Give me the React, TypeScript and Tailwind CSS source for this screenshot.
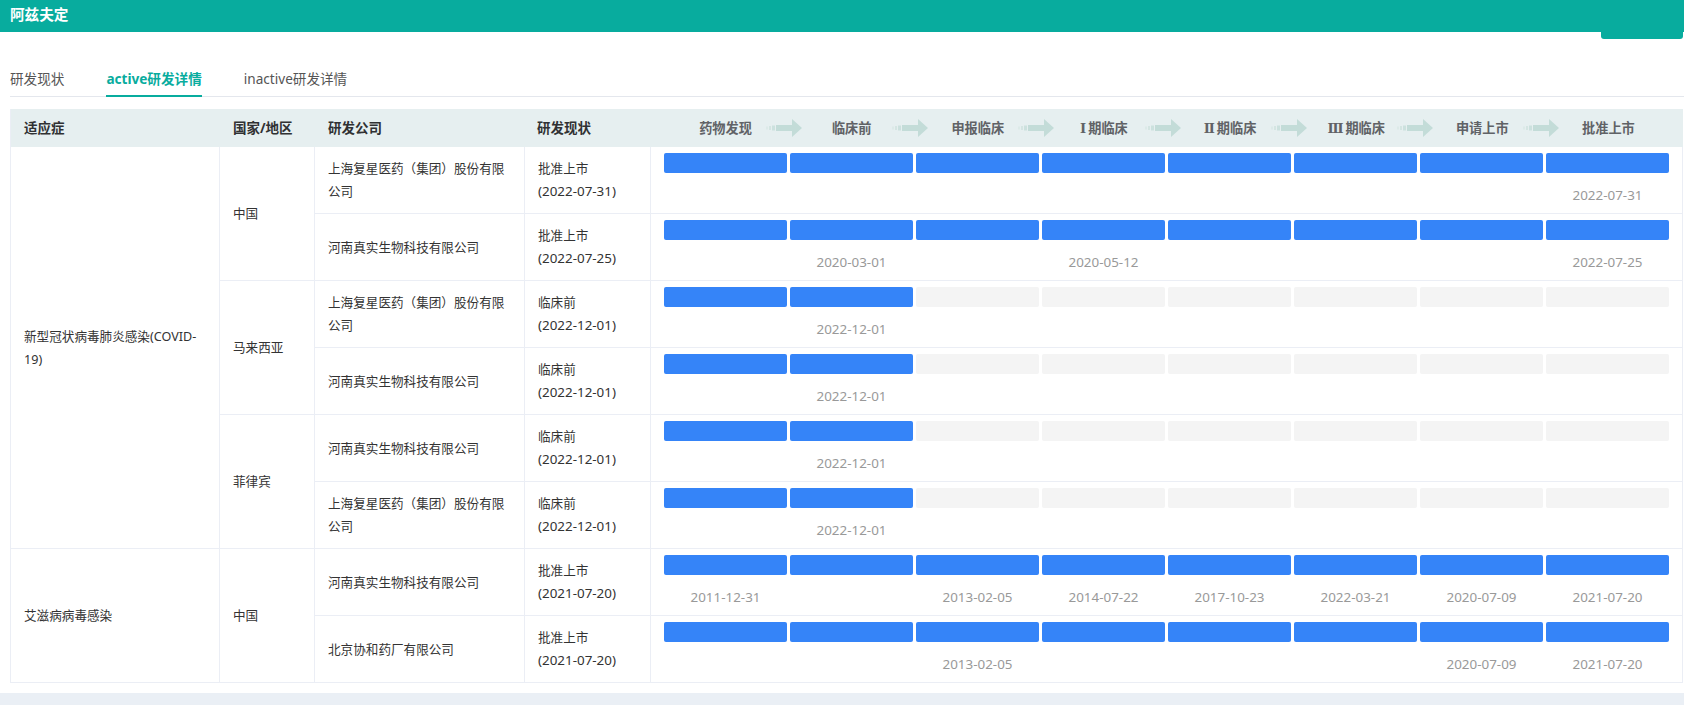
import { Fragment } from 'react';

const TEAL = '#08ac9e';

const stages = ['药物发现', '临床前', '申报临床', 'Ⅰ期临床', 'Ⅱ期临床', 'Ⅲ期临床', '申请上市', '批准上市'];

type Trial = {
  company: string;
  status: string;
  date: string;
  filled: number;
  dates: (string | null)[];
};

type Country = { name: string; trials: Trial[] };
type Indication = { name: string; span: string; countries: Country[] };

const data: Indication[] = [
  {
    name: '新型冠状病毒肺炎感染(COVID-19)',
    span: 'row-span-6',
    countries: [
      {
        name: '中国',
        trials: [
          {
            company: '上海复星医药（集团）股份有限公司',
            status: '批准上市',
            date: '2022-07-31',
            filled: 8,
            dates: [null, null, null, null, null, null, null, '2022-07-31'],
          },
          {
            company: '河南真实生物科技有限公司',
            status: '批准上市',
            date: '2022-07-25',
            filled: 8,
            dates: [null, '2020-03-01', null, '2020-05-12', null, null, null, '2022-07-25'],
          },
        ],
      },
      {
        name: '马来西亚',
        trials: [
          {
            company: '上海复星医药（集团）股份有限公司',
            status: '临床前',
            date: '2022-12-01',
            filled: 2,
            dates: [null, '2022-12-01', null, null, null, null, null, null],
          },
          {
            company: '河南真实生物科技有限公司',
            status: '临床前',
            date: '2022-12-01',
            filled: 2,
            dates: [null, '2022-12-01', null, null, null, null, null, null],
          },
        ],
      },
      {
        name: '菲律宾',
        trials: [
          {
            company: '河南真实生物科技有限公司',
            status: '临床前',
            date: '2022-12-01',
            filled: 2,
            dates: [null, '2022-12-01', null, null, null, null, null, null],
          },
          {
            company: '上海复星医药（集团）股份有限公司',
            status: '临床前',
            date: '2022-12-01',
            filled: 2,
            dates: [null, '2022-12-01', null, null, null, null, null, null],
          },
        ],
      },
    ],
  },
  {
    name: '艾滋病病毒感染',
    span: 'row-span-2',
    countries: [
      {
        name: '中国',
        trials: [
          {
            company: '河南真实生物科技有限公司',
            status: '批准上市',
            date: '2021-07-20',
            filled: 8,
            dates: ['2011-12-31', null, '2013-02-05', '2014-07-22', '2017-10-23', '2022-03-21', '2020-07-09', '2021-07-20'],
          },
          {
            company: '北京协和药厂有限公司',
            status: '批准上市',
            date: '2021-07-20',
            filled: 8,
            dates: [null, null, '2013-02-05', null, null, null, '2020-07-09', '2021-07-20'],
          },
        ],
      },
    ],
  },
];

function StepArrow() {
  return (
    <svg
      width="36"
      height="18"
      viewBox="0 0 36 18"
      className="absolute right-[-15px] top-1/2 -translate-y-1/2"
      aria-hidden
    >
      <rect x="0" y="7.5" width="2" height="3" fill="#dceae8" />
      <rect x="3" y="7" width="2" height="4" fill="#d4e5e2" />
      <rect x="6" y="6.5" width="3" height="5" fill="#cce1de" />
      <rect x="10" y="6" width="17" height="6" fill="#c3dcd8" />
      <path d="M26 0 L36 9 L26 18 Z" fill="#c3dcd8" />
    </svg>
  );
}

// roman numerals in the reference are drawn with serifs
function StageLabel({ text }: { text: string }) {
  const first = text[0];
  if (first === 'Ⅰ' || first === 'Ⅱ' || first === 'Ⅲ') {
    return (
      <>
        <span className="mr-[2px]" style={{ fontFamily: '"DejaVu Serif", serif' }}>
          {first}
        </span>
        {text.slice(1)}
      </>
    );
  }
  return <>{text}</>;
}

const cell = 'border-r border-b border-[#ebeef5]';
const textCell = `${cell} flex items-center px-[13px] text-[12.6px] leading-[23px] text-[#333]`;

function StageCell({ trial }: { trial: Trial }) {
  return (
    <div className={`${cell} px-[13px] pt-[6px]`}>
      <div className="grid grid-cols-8 gap-x-[3px]">
        {stages.map((s, i) => (
          <div
            key={s}
            className={`h-[20px] rounded-[2px] ${i < trial.filled ? 'bg-[#3584f8]' : 'bg-[#f4f4f4]'}`}
          />
        ))}
        {trial.dates.map((d, i) => (
          <div key={i} className="mt-[12px] text-center text-[13.4px] leading-[20px] text-[#999]">
            {d ?? '\u00a0'}
          </div>
        ))}
      </div>
    </div>
  );
}

export default function App() {
  return (
    <div
      className="min-h-screen bg-[#eaeff5]"
      style={{ fontFamily: '"Noto Sans", "Noto Sans CJK SC", sans-serif' }}
    >
      <div className="bg-white pb-[10px]">
        <div
          className="h-[32px] px-[10px] pt-[3px] text-[14.6px] font-bold leading-[22px] text-white"
          style={{ backgroundColor: TEAL }}
        >
          阿兹夫定
        </div>
        <div className="flex justify-end">
          <div className="mr-px h-[7px] w-[82px] rounded-b-[3px]" style={{ backgroundColor: TEAL }} />
        </div>

        <div className="ml-[10px] mt-[30px] flex gap-[42px] border-b border-[#e4e7ed] text-[13.6px] leading-[20px]">
          <span className="-mb-px border-b-2 border-transparent pb-[6px] text-[#555]">研发现状</span>
          <span className="-mb-px border-b-2 border-[#08ac9e] pb-[6px] font-bold text-[#08ac9e]">active研发详情</span>
          <span className="-mb-px border-b-2 border-transparent pb-[6px] text-[#555]">inactive研发详情</span>
        </div>

        <div className="ml-[10px] mt-[12px] grid w-[1673px] grid-cols-[209px_95px_210px_126px_1032px] grid-rows-[38px_repeat(8,67px)] border-l border-[#ebeef5]">
          <div className="flex items-center bg-[#e6eff0] px-[13px] text-[13.5px] font-bold text-[#303133]">适应症</div>
          <div className="flex items-center bg-[#e6eff0] px-[13px] text-[13.5px] font-bold text-[#303133]">国家/地区</div>
          <div className="flex items-center bg-[#e6eff0] px-[13px] text-[13.5px] font-bold text-[#303133]">研发公司</div>
          <div className="flex items-center bg-[#e6eff0] px-[12px] text-[13.5px] font-bold text-[#303133]">研发现状</div>
          <div className="flex items-center bg-[#e6eff0] px-[13px]">
            <div className="grid w-full grid-cols-8 gap-x-[3px]">
              {stages.map((s, i) => (
                <div
                  key={s}
                  className="relative flex justify-center text-[13.2px] font-bold leading-[20px] text-[#606266]"
                >
                  <span>
                    <StageLabel text={s} />
                  </span>
                  {i < stages.length - 1 && <StepArrow />}
                </div>
              ))}
            </div>
          </div>

          {data.map((ind) => (
            <Fragment key={ind.name}>
              <div className={`${textCell} ${ind.span}`}>{ind.name}</div>
              {ind.countries.map((c) => (
                <Fragment key={c.name}>
                  <div className={`${textCell} row-span-2`}>{c.name}</div>
                  {c.trials.map((t) => (
                    <Fragment key={t.company}>
                      <div className={textCell}>{t.company}</div>
                      <div className={`${textCell} px-[12px]`}>
                        <div>
                          <div>{t.status}</div>
                          <div className="text-[13.4px]">({t.date})</div>
                        </div>
                      </div>
                      <StageCell trial={t} />
                    </Fragment>
                  ))}
                </Fragment>
              ))}
            </Fragment>
          ))}
        </div>
      </div>
    </div>
  );
}
